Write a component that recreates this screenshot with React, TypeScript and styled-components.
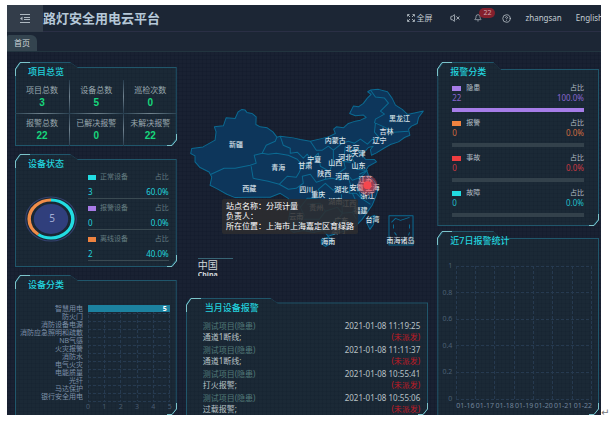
import React from 'react';
import styled, { createGlobalStyle } from 'styled-components';
import { Bell, CircleQuestionMark, VolumeX } from 'lucide-react';

const GlobalStyle = createGlobalStyle`
  * { box-sizing: border-box; }
  body {
    margin: 0;
    background: #fff;
    font-family: 'Noto Sans', 'Noto Sans CJK SC', sans-serif;
    font-size: 8px;
    line-height: 12px;
    color: #b4bfc6;
  }
  button {
    font: inherit;
    color: inherit;
    background: none;
    border: 0;
    padding: 0;
    cursor: pointer;
    white-space: nowrap;
  }
`;

const CYAN = '#22d3de';
const LINE = '#20566b';

const Page = styled.div`
  display: flex;
  min-height: 100vh;
  padding: 5px 0 11px 7px;
`;

const Frame = styled.div`
  flex: 1;
  min-width: 0;
  display: flex;
  flex-direction: column;
  overflow: hidden;
  background-color: #192132;
  background-image:
    repeating-linear-gradient(0deg, transparent 0 3px, rgba(10, 18, 34, 0.18) 3px 4px),
    repeating-linear-gradient(90deg, transparent 0 3px, rgba(10, 18, 34, 0.18) 3px 4px);
`;

const EndMark = styled.div`
  align-self: flex-end;
  width: 9px;
  margin-bottom: -4px;
  color: #777;
  font-family: 'DejaVu Sans', sans-serif;
  font-size: 10px;
`;

const Header = styled.header`
  display: flex;
  align-items: center;
  height: 27px;
  background: #1c2635;
  border-bottom: 1px solid #2a2f45;
`;

const MenuButton = styled.button`
  display: grid;
  place-items: center;
  width: 36px;
  height: 27px;
  background: #333d4a;
`;

const Brand = styled.h1`
  flex: 1;
  margin: 0;
  font-size: 13px;
  line-height: 20px;
  font-weight: 700;
  color: #b5c8d8;
  white-space: nowrap;
`;

const Tools = styled.nav`
  display: flex;
  align-items: center;
  gap: 14px;
  margin-right: -2px;
  color: #c3cbd2;
`;

const ToolButton = styled.button`
  display: flex;
  align-items: center;
  gap: 1px;
`;

const FullscreenButton = styled(ToolButton)`
  margin-right: 4px;
`;

const BellButton = styled(ToolButton)`
  position: relative;
  width: 14px;
`;

const Badge = styled.span`
  position: absolute;
  left: 5px;
  top: -6px;
  width: 16px;
  border-radius: 5px;
  background: #84202d;
  color: #d0a8b0;
  font-size: 7px;
  line-height: 10px;
  text-align: center;
`;

const TabBar = styled.div`
  display: flex;
  align-items: flex-end;
  height: 20px;
  background: #1c2635;
  border-bottom: 1px solid #22343f;
`;

const Tab = styled.button`
  width: 30px;
  height: 16px;
  font-size: 8px;
  color: #cdd5d8;
  background: #34444f;
  border-radius: 2px 6px 0 0;
`;

const Board = styled.main`
  flex: 1;
  display: grid;
  grid-template-columns: minmax(0, 2fr) minmax(0, 3fr) minmax(0, 2fr);
  gap: 9px;
  padding: 10px 2px 0 8px;
`;

const Column = styled.div<{ $gap: number }>`
  display: flex;
  flex-direction: column;
  gap: ${(p) => p.$gap}px;
`;

const outline = (notch: number, drop: number) => `polygon(
  0 7px, 5px 0, ${notch}px 0, ${notch + 7}px ${drop}px, 100% ${drop}px,
  100% calc(100% - 6px), calc(100% - 5px) 100%, 0 100%)`;

const PanelBox = styled.section<{ $notch: number; $drop: number; $open?: boolean }>`
  position: relative;
  isolation: isolate;
  display: flex;
  flex-direction: column;
  flex: ${(p) => (p.$open ? '1 0 auto' : '0 0 auto')};

  &::before,
  &::after {
    content: '';
    position: absolute;
    z-index: -1;
    clip-path: ${(p) => outline(p.$notch, p.$drop)};
  }
  &::before {
    inset: 0;
    background: ${LINE};
  }
  &::after {
    inset: 1px 1px ${(p) => (p.$open ? '0' : '1px')} 1px;
    background-color: #1b2936;
    background-image:
      repeating-linear-gradient(0deg, transparent 0 3px, rgba(12, 24, 38, 0.15) 3px 4px),
      repeating-linear-gradient(90deg, transparent 0 3px, rgba(12, 24, 38, 0.15) 3px 4px);
  }
`;

const Corner = styled.svg<{ $end?: boolean }>`
  position: absolute;
  ${(p) => (p.$end ? 'right: 0; bottom: 0;' : 'left: 0; top: 0;')}
  fill: none;
  stroke: #7cc4cb;
`;

const PanelTitle = styled.h2<{ $indent?: number }>`
  margin: 0;
  padding: 4px 0 0 ${(p) => p.$indent ?? 13}px;
  font-size: 9px;
  line-height: 12px;
  font-weight: 500;
  color: ${CYAN};
`;

type PanelProps = {
  title: string;
  notch: number;
  drop?: number;
  indent?: number;
  open?: boolean;
  children: React.ReactNode;
};

function Panel({ title, notch, drop = 5, indent, open, children }: PanelProps) {
  return (
    <PanelBox $notch={notch} $drop={drop} $open={open}>
      <Corner width="22" height="14" aria-hidden>
        <path d="M.5 14V7L5 .5H15" />
      </Corner>
      <PanelTitle $indent={indent}>{title}</PanelTitle>
      {children}
      <Corner $end width="10" height="12" aria-hidden>
        <path d="M9.500 0V6L5 11.500H0" />
      </Corner>
    </PanelBox>
  );
}

/* Project overview */

const StatGrid = styled.dl`
  display: grid;
  grid-template-columns: repeat(3, 1fr);
  margin: 2px 0 0;
  text-align: center;
`;

const Stat = styled.div`
  padding: 4px 0;
  & + & {
    border-left: 1px solid;
    border-image: linear-gradient(#22384a, #70828f, #22384a) 1;
  }
  &:nth-child(4) {
    border-left: 0;
  }
  &:nth-child(n + 4) {
    background: linear-gradient(90deg, #2a4252, #71838e, #2a4252) top / 100% 1px no-repeat;
  }
`;

const StatName = styled.dt`
  color: #9ba9b0;
`;

const StatValue = styled.dd`
  margin: 1px 0 0;
  font-family: 'Liberation Sans', sans-serif;
  font-size: 10px;
  font-weight: 700;
  color: #17d67c;
`;

const stats = [
  ['项目总数', '3'],
  ['设备总数', '5'],
  ['巡检次数', '0'],
  ['报警总数', '22'],
  ['已解决报警', '0'],
  ['未解决报警', '22'],
];

/* Device status */

const StatusBody = styled.div`
  display: grid;
  grid-template-columns: 73px 1fr;
  margin-top: 1px;
  padding: 0 8px 6px 0;
`;

const Donut = styled.svg`
  justify-self: end;
  margin: 24px 11px 0 0;
`;

const StatusList = styled.div`
  display: grid;
  gap: 3px;
`;

const StatusRow = styled.div`
  border-bottom: 1px solid #3a4a52;
  font-size: 7px;
  color: #637b80;
`;

const Line = styled.div`
  display: flex;
  align-items: center;
  justify-content: space-between;
`;

const Key = styled.span<{ $color: string; $gap: number }>`
  display: flex;
  align-items: center;
  gap: ${(p) => p.$gap}px;
  &::before {
    content: '';
    width: ${(p) => p.$gap + 4}px;
    height: 5px;
    background: ${(p) => p.$color};
  }
`;

const StatusValue = styled(Line)`
  margin-top: 3px;
  font-size: 8px;
  color: ${CYAN};
`;

const statuses = [
  { name: '正常设备', color: '#22dce2', count: 3, share: '60.0%' },
  { name: '报警设备', color: '#a77ae6', count: 0, share: '0.0%' },
  { name: '离线设备', color: '#ee8340', count: 2, share: '40.0%' },
];

function StatusDonut() {
  return (
    <Donut width="52" height="48" viewBox="0 0 52 48" role="img" aria-label="5">
      <g transform="translate(26 24) scale(1.150 1) rotate(-90)" fill="none">
        <circle r="22" stroke="#34416f" strokeWidth="1" />
        <circle r="19" stroke="#22dce2" strokeWidth="3" pathLength="100" strokeDasharray="60 40" />
        <circle r="19" stroke="#f08d49" strokeWidth="3" pathLength="100" strokeDasharray="40 60" strokeDashoffset="-60" />
        <circle r="15" fill="#303f7c" />
      </g>
      <text x="27" y="27" textAnchor="middle" fontSize="10" fill="#a3aed6">5</text>
    </Donut>
  );
}

/* Device categories */

const BarChart = styled.div`
  display: grid;
  grid-template-columns: 68px 1fr;
  column-gap: 5px;
  margin-top: 14px;
  padding: 0 7px 0 0;
  font-size: 7px;
`;

const BarNames = styled.div`
  line-height: 8px;
  text-align: right;
  white-space: nowrap;
  color: #7d90a8;
`;

const BarPlot = styled.div`
  position: relative;
`;

const GridLines = styled.svg`
  position: absolute;
  inset: 0;
  width: 100%;
  height: 100%;
  overflow: visible;
  stroke: #263a50;
  stroke-dasharray: 3 2;
  shape-rendering: crispEdges;
`;

const Bar = styled.div`
  position: relative;
  height: 7px;
  padding-right: 3px;
  background: #1c82a0;
  color: #fff;
  font-weight: 700;
  line-height: 7px;
  text-align: right;
`;

const Ticks = styled.div`
  grid-column: 2;
  display: flex;
  justify-content: space-between;
  margin: 0 -2px;
  color: #4a5d71;
`;

const categories = [
  '智慧用电', '防火门', '消防设备电源', '消防应急照明和疏散', 'NB气感', '火灾报警',
  '消防水', '电气火灾', '电能质量', '光纤', '马达保护', '银行安全用电',
];

function Grid({ cols, rows }: { cols: number; rows: number }) {
  return (
    <GridLines aria-hidden>
      {Array.from({ length: cols + 1 }, (_, i) => {
        const x = `${(i * 100) / cols}%`;
        return <line key={`c${i}`} x1={x} x2={x} y1="0" y2="100%" />;
      })}
      {Array.from({ length: rows + 1 }, (_, i) => {
        const y = `${(i * 100) / rows}%`;
        return <line key={`r${i}`} y1={y} y2={y} x1="0" x2="100%" />;
      })}
    </GridLines>
  );
}

/* Map */

const MapStage = styled.div`
  position: relative;
`;

const MapDrawing = styled.svg`
  display: block;
  width: 100%;
`;

const MapTip = styled.div`
  position: absolute;
  left: 15%;
  top: 58%;
  padding: 2px 4px 3px;
  background: rgba(45, 45, 48, 0.86);
  border-radius: 2px;
  color: #fff;
  line-height: 10px;
  white-space: nowrap;
  p { margin: 0; }
`;

const MapCaption = styled.div`
  position: absolute;
  left: 5%;
  top: 83%;
  width: 35px;
  height: 18px;
  overflow: hidden;
  border-top: 1px solid #386575;
  color: #d2d8dc;
  font-size: 10px;
  line-height: 12px;
  small {
    display: block;
    font-size: 7px;
    line-height: 7px;
    font-weight: 700;
  }
`;

const land =
  'M241.700 109.300L245 110L246.700 112.300L251.700 113.300L256 116.700L255.700 124.300L260 126.700L267 127.700L272.700 131.700L276.700 137L280 136L293 137.700L300 139.300L310 141L320 138.700L328 136.700L335 133.300L333.300 129L336 126.700L343 127.700L348 123.300L355 121L360 120L365.700 117.300L363 115L355 115.700L349.300 113.300L353 106L358 106.700L363 103.300L366.700 98.300L370.700 94.300L367.300 91.700L370 90L378 89.300L387 91.700L391.700 98.300L395 105L401.700 109.300L407 114.300L415 112.700L422.700 111L418 117.300L416.700 123.300L411 126L408 129L409.300 135L404 137.300L398 141.700L390 144.300L383 148.300L376 152.700L371 155L370 149.300L372.700 146L368 147.300L365 150.700L361 154L365 159L374 159.300L376 161.700L368 166L366 169.300L368 175L374 181L377.700 189L375 197L371.700 205L366.700 212L361.700 219L353 228L340 232L330 235L328 236L323 230L313 232L303 230L293 232L286.700 226.700L290 210L290 205L288 198L280 193L270 197L253 197L235 197.300L226.700 194L216.700 188.300L210 185L211.700 176.700L209 171.700L200 167.300L195 161.700L195 155.700L190.700 153.300L191.700 148.300L203 146.700L215 140L216 131.700L214.300 126.700L223.300 125.700L226 117.700L235 118.300L238 111.700Z';

const borders = [
  'M276.700 137L275 141L266 145L262 153L254 155L256 163L250 165L235 168L224 168L211 174',
  'M262 153L268 154L276 153L288 155L297 159L302 165L299 172L296 177L287 176L279 184L268 181L253 178L251 166',
  'M280 136L283 145L290 148L290 153L297 152L303 158L307 154L311 160L306 165L302 165',
  'M279 184L288 189L296 188L303 183L302 176L310 174L316 182L325 179',
  'M310 141L316 150L322 150L328 146L333 150L342 143L348 141L354 143L360 139L367 144L372 139L380 139L374 132L375 123L384 127L393 132L408 131',
  'M370 90L375 97L384 98L388 103L380 111L384 114L375 119L374 123',
  'M311 160L318 153L320 166L327 170L325 179L332 178L340 180L347 174L352 180L360 177L367 170',
  'M333 150L333 160L329 172M345 146L343 160L345 168L338 173L339 180M342 161L350 162L353 156L349 151L357 148L361 154M353 160L356 169L365 170',
  'M290 205L296 200L300 207L307 198L315 198L322 196L318 189L325 183L333 190L341 186L349 193L356 193L361 198L370 204',
  'M300 207L304 215L300 222L307 231M307 204L320 203L325 211L319 219L303 219M325 211L337 207L342 213L337 220L323 222L320 231M341 194L342 213L352 212L356 219M352 193L357 204L352 212',
  'M347 174L350 184L349 193M360 177L357 186L361 198M367 170L359 174',
];

const provinces: [string, number, number][] = [
  ['新疆', 236, 147], ['青海', 278, 170], ['西藏', 249, 191], ['甘肃', 305, 168],
  ['宁夏', 314, 162], ['内蒙古', 335, 143], ['黑龙江', 399, 121], ['吉林', 386, 134],
  ['辽宁', 379, 143], ['北京', 352, 151], ['天津', 358, 156], ['河北', 345, 160],
  ['山西', 335, 165], ['山东', 358, 168], ['陕西', 324, 176], ['河南', 342, 179],
  ['江苏', 365, 182], ['安徽', 356, 190], ['上海', 372, 190], ['四川', 306, 192],
  ['重庆', 318, 197], ['湖北', 341, 192], ['浙江', 367, 198], ['湖南', 335, 204],
  ['江西', 349, 206], ['福建', 360, 213], ['贵州', 316, 210], ['云南', 296, 219],
  ['广东', 341, 223], ['澳门', 338, 233], ['台湾', 372, 222], ['海南', 328, 244],
  ['南海诸岛', 400, 243],
];

function ChinaMap() {
  return (
    <MapDrawing viewBox="186 62 242 235" role="img" aria-label="中国">
      <g fill="#0d365b" stroke="#0b6a92" strokeWidth="1" strokeLinejoin="round">
        <path d={land} />
        <path d="M371 216L374.500 215L373 224L369.500 229L366.500 223Z" />
        <path d="M321 239L328 236.500L332 239L329 244L325 246L321 243Z" />
        <path fill="none" d={borders.join('')} />
        <path fill="none" d="M388.500 215.500H412.500V244.500H388.500ZM391 222L395 218L400 220L409 217M393 224V228M394 232L396 235M400 240H402M408 235L409 232M409 228V224" />
      </g>
      <g fill="#d9e3ea" fontSize="7" fontWeight="500" textAnchor="middle">
        {provinces.map(([name, x, y]) => (
          <text key={name} x={x} y={y}>{name}</text>
        ))}
      </g>
      <circle cx="367" cy="185" r="10" fill="#e8474f" opacity="0.400" />
      <circle cx="367" cy="185" r="7" fill="#e8474f" opacity="0.400" />
      <circle cx="367" cy="185" r="4" fill="#f5474e" />
    </MapDrawing>
  );
}

/* Alarm list */

const AlarmList = styled.ul`
  display: grid;
  gap: 2px;
  margin: 6px 8px 0 17px;
  padding: 0;
  list-style: none;
  line-height: 11px;
  color: #b9c3c7;
`;

const Project = styled.span`
  color: #527a79;
`;

const Pending = styled.span`
  color: #c01a25;
`;

const alarms = [
  ['通道1断线;', '2021-01-08 11:19:25'],
  ['通道1断线;', '2021-01-08 11:11:37'],
  ['打火报警;', '2021-01-08 10:55:41'],
  ['过载报警;', '2021-01-08 10:55:06'],
];

/* Alarm categories */

const KindList = styled.div`
  display: grid;
  gap: 6px;
  margin-top: 5px;
  padding: 0 15px 9px;
  line-height: 10px;
`;

const KindLabel = styled(Line)`
  font-size: 7px;
`;

const KindValue = styled(Line)<{ $color: string }>`
  color: ${(p) => p.$color};
`;

const Track = styled.div<{ $color: string; $full: boolean }>`
  height: 4px;
  margin-top: 5px;
  background: ${(p) => (p.$full ? p.$color : '#33414b')};
`;

const kinds = [
  { name: '隐患', color: '#a67de8', text: '#8765cf', count: 22, share: '100.0%' },
  { name: '报警', color: '#f08340', text: '#cf6b40', count: 0, share: '0.0%' },
  { name: '事故', color: '#ee3d40', text: '#c93943', count: 0, share: '0.0%' },
  { name: '故障', color: '#22dce2', text: '#20bfc9', count: 0, share: '0.0%' },
];

/* Seven day chart */

const Trend = styled.div`
  flex: 1;
  display: grid;
  grid-template-columns: 15px 1fr;
  grid-template-rows: minmax(133px, 1fr) 16px;
  column-gap: 4px;
  margin-top: 19px;
  padding-right: 7px;
  font-size: 7px;
`;

const TrendScale = styled.div`
  display: flex;
  flex-direction: column;
  justify-content: space-between;
  margin: -6px 0;
  text-align: right;
  color: #4c6074;
`;

const TrendDays = styled.div`
  grid-column: 2;
  display: flex;
  justify-content: space-between;
  padding-top: 1px;
  color: #72859b;
`;

export default function App() {
  return (
    <>
      <GlobalStyle />
      <Page>
        <Frame>
          <Header>
            <MenuButton aria-label="收起菜单">
              <svg width="12" height="9" viewBox="0 0 12 9" stroke="#aeb8c0" fill="none">
                <path d="M1 .5H11M5 3.500H11M5 5.500H11M1 8.500H11" />
                <path d="M3.500 2.500V6.500L1 4.500Z" fill="#aeb8c0" stroke="none" />
              </svg>
            </MenuButton>
            <Brand>路灯安全用电云平台</Brand>
            <Tools>
              <FullscreenButton>
                <svg width="8" height="8" viewBox="0 0 8 8" stroke="currentColor" fill="none">
                  <path d="M.5 2.500V.5H2.500M5.500 .5H7.500V2.500M.5 5.500V7.500H2.500M5.500 7.500H7.500V5.500M1 1L3 3M7 1L5 3M1 7L3 5M7 7L5 5" strokeWidth=".8" />
                </svg>
                全屏
              </FullscreenButton>
              <ToolButton aria-label="静音"><VolumeX size={10} /></ToolButton>
              <BellButton aria-label="报警消息">
                <Bell size={8} />
                <Badge>22</Badge>
              </BellButton>
              <ToolButton aria-label="帮助"><CircleQuestionMark size={9} /></ToolButton>
              <ToolButton>zhangsan</ToolButton>
              <ToolButton>English</ToolButton>
            </Tools>
          </Header>
          <TabBar>
            <Tab>首页</Tab>
          </TabBar>
          <Board>
            <Column $gap={8}>
              <Panel title="项目总览" notch={55}>
                <StatGrid>
                  {stats.map(([name, value]) => (
                    <Stat key={name}>
                      <StatName>{name}</StatName>
                      <StatValue>{value}</StatValue>
                    </Stat>
                  ))}
                </StatGrid>
              </Panel>
              <Panel title="设备状态" notch={55}>
                <StatusBody>
                  <StatusDonut />
                  <StatusList>
                    {statuses.map((s) => (
                      <StatusRow key={s.name}>
                        <Line>
                          <Key $color={s.color} $gap={4}>{s.name}</Key>
                          <span>占比</span>
                        </Line>
                        <StatusValue>
                          <span>{s.count}</span>
                          <span>{s.share}</span>
                        </StatusValue>
                      </StatusRow>
                    ))}
                  </StatusList>
                </StatusBody>
              </Panel>
              <Panel title="设备分类" notch={55} open>
                <BarChart>
                  <BarNames>
                    {categories.map((name) => <div key={name}>{name}</div>)}
                  </BarNames>
                  <BarPlot>
                    <Grid cols={5} rows={12} />
                    <Bar>5</Bar>
                  </BarPlot>
                  <Ticks>
                    {[0, 1, 2, 3, 4, 5].map((n) => <span key={n}>{n}</span>)}
                  </Ticks>
                </BarChart>
              </Panel>
            </Column>

            <Column $gap={0}>
              <MapStage>
                <ChinaMap />
                <MapTip>
                  <p>站点名称：分项计量</p>
                  <p>负责人：</p>
                  <p>所在位置：上海市上海嘉定区育绿路</p>
                </MapTip>
                <MapCaption>
                  中国
                  <small>China</small>
                </MapCaption>
              </MapStage>
              <Panel title="当月设备报警" notch={84} indent={19} open>
                <AlarmList>
                  {alarms.map(([text, time]) => (
                    <li key={time}>
                      <Line>
                        <Project>测试项目(隐患)</Project>
                        <time>{time}</time>
                      </Line>
                      <Line>
                        <span>{text}</span>
                        <Pending>(未派发)</Pending>
                      </Line>
                    </li>
                  ))}
                </AlarmList>
              </Panel>
            </Column>

            <Column $gap={5}>
              <Panel title="报警分类" notch={56} drop={7}>
                <KindList>
                  {kinds.map((k) => (
                    <div key={k.name}>
                      <KindLabel>
                        <Key $color={k.color} $gap={5}>{k.name}</Key>
                        <span>占比</span>
                      </KindLabel>
                      <KindValue $color={k.text}>
                        <span>{k.count}</span>
                        <span>{k.share}</span>
                      </KindValue>
                      <Track $color={k.color} $full={k.count > 0} />
                    </div>
                  ))}
                </KindList>
              </Panel>
              <Panel title="近7日报警统计" notch={56} drop={7} open>
                <Trend>
                  <TrendScale>
                    {['1', '0.8', '0.6', '0.4', '0.2', '0'].map((n) => <span key={n}>{n}</span>)}
                  </TrendScale>
                  <BarPlot>
                    <Grid cols={7} rows={5} />
                  </BarPlot>
                  <TrendDays>
                    {[16, 17, 18, 19, 20, 21, 22].map((d) => <span key={d}>01-{d}</span>)}
                  </TrendDays>
                </Trend>
              </Panel>
            </Column>
          </Board>
        </Frame>
        <EndMark>↵</EndMark>
      </Page>
    </>
  );
}
